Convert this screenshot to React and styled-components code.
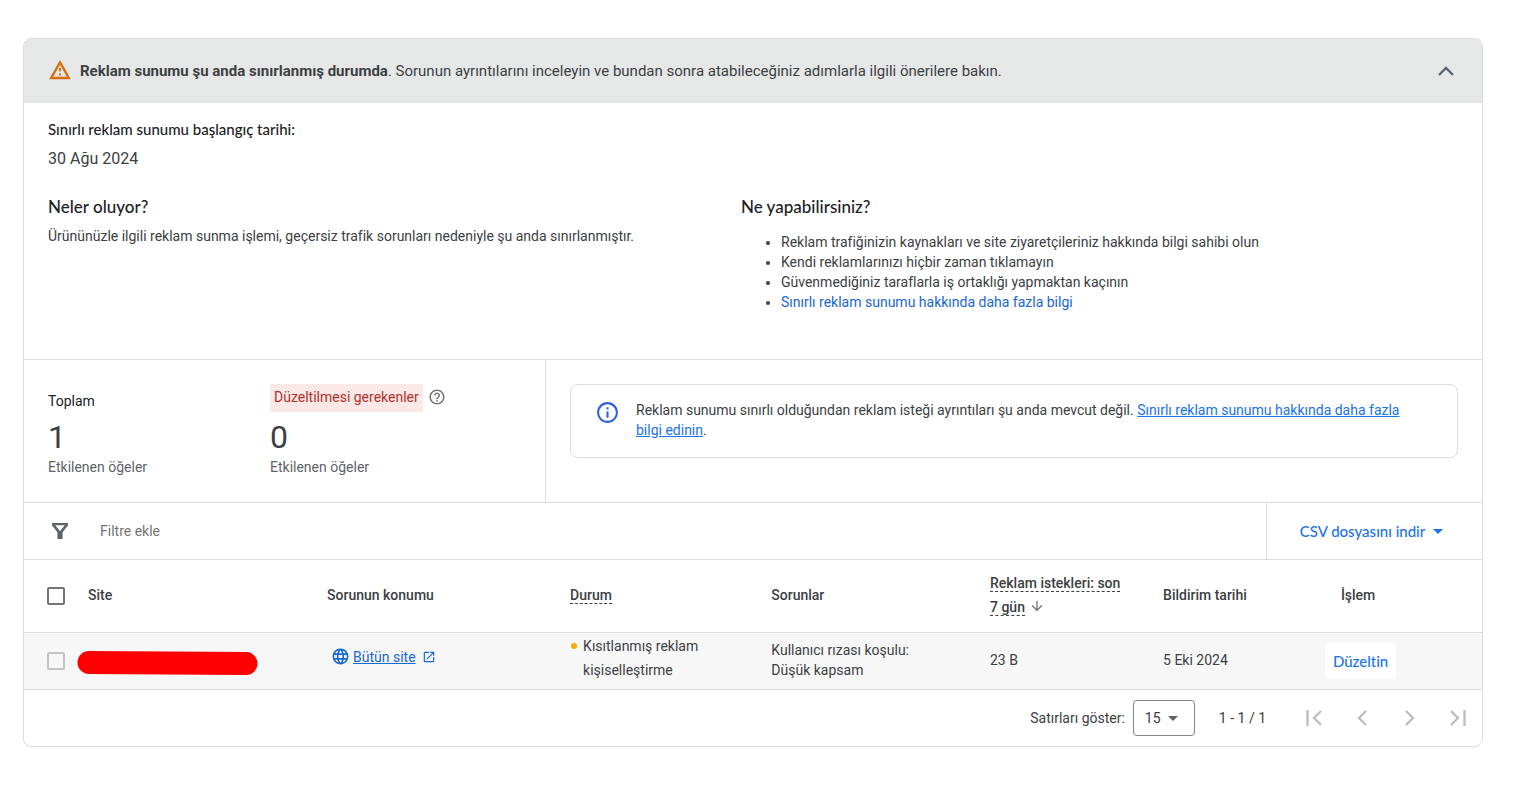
import React from 'react'
import styled, { createGlobalStyle } from 'styled-components'
import {
  MdArrowDownward,
  MdHelpOutline,
  MdInfoOutline,
  MdLanguage,
  MdOpenInNew,
} from 'react-icons/md'

const tips = [
  'Reklam trafiğinizin kaynakları ve site ziyaretçileriniz hakkında bilgi sahibi olun',
  'Kendi reklamlarınızı hiçbir zaman tıklamayın',
  'Güvenmediğiniz taraflarla iş ortaklığı yapmaktan kaçının',
]

const pagers = [
  { label: 'İlk sayfa', path: 'M9.5 8v16M23 9l-7 7 7 7' },
  { label: 'Önceki sayfa', path: 'M20 9l-7 7 7 7' },
  { label: 'Sonraki sayfa', path: 'M12 9l7 7-7 7' },
  { label: 'Son sayfa', path: 'M9 9l7 7-7 7M22.5 8v16' },
]

function App() {
  return (
    <Page>
      <GlobalStyle />
      <Card>
        <Banner />
        <Details />
        <Summary />
        <FilterBar />
        <SiteTable />
        <Pagination />
      </Card>
    </Page>
  )
}

export default App

function Banner() {
  return (
    <BannerBar>
      <svg width="24" height="24" viewBox="0 0 24 24" aria-hidden="true">
        <path d="M12 3.4L20.8 19H3.2z" fill="none" stroke="#d56e0c" strokeWidth="2.4" />
        <path d="M11 9h2v3.2h-2zM11 14.4h2v2.2h-2z" fill="#d56e0c" />
      </svg>
      <BannerText>
        <strong>Reklam sunumu şu anda sınırlanmış durumda</strong>. Sorunun ayrıntılarını inceleyin ve
        bundan sonra atabileceğiniz adımlarla ilgili önerilere bakın.
      </BannerText>
      <IconButton aria-label="Daralt">
        <LineIcon viewBox="0 0 32 32">
          <path d="M9 20l7-7 7 7" />
        </LineIcon>
      </IconButton>
    </BannerBar>
  )
}

function Details() {
  return (
    <DetailsWrap>
      <DateLabel>Sınırlı reklam sunumu başlangıç tarihi:</DateLabel>
      <DateValue>30 Ağu 2024</DateValue>
      <Columns>
        <div>
          <Heading>Neler oluyor?</Heading>
          <Paragraph>
            Ürününüzle ilgili reklam sunma işlemi, geçersiz trafik sorunları nedeniyle şu anda sınırlanmıştır.
          </Paragraph>
        </div>
        <div>
          <Heading>Ne yapabilirsiniz?</Heading>
          <TipList>
            {tips.map((tip) => (
              <li key={tip}>{tip}</li>
            ))}
            <li>
              <PlainLink href="#">Sınırlı reklam sunumu hakkında daha fazla bilgi</PlainLink>
            </li>
          </TipList>
        </div>
      </Columns>
    </DetailsWrap>
  )
}

function Summary() {
  return (
    <SummaryRow>
      <Stats>
        <div>
          <StatTitle $center>Toplam</StatTitle>
          <StatNumber>1</StatNumber>
          <StatLabel>Etkilenen öğeler</StatLabel>
        </div>
        <div>
          <StatTitle>
            <Chip>Düzeltilmesi gerekenler</Chip>
            <HelpButton aria-label="Yardım">
              <MdHelpOutline size={18} />
            </HelpButton>
          </StatTitle>
          <StatNumber>0</StatNumber>
          <StatLabel>Etkilenen öğeler</StatLabel>
        </div>
      </Stats>
      <Notice>
        <MdInfoOutline size={25} color="#2a63d8" />
        <p>
          Reklam sunumu sınırlı olduğundan reklam isteği ayrıntıları şu anda mevcut değil.{' '}
          <TextLink href="#">Sınırlı reklam sunumu hakkında daha fazla bilgi edinin</TextLink>.
        </p>
      </Notice>
    </SummaryRow>
  )
}

function FilterBar() {
  return (
    <FilterRow>
      <svg width="24" height="24" viewBox="0 0 24 24" aria-hidden="true">
        <path
          d="M4 4h16v2.3l-5.4 7V20H9.4v-6.7L4 6.3zM7.3 6.2L12 12.2l4.7-6z"
          fill="#5f6368"
          fillRule="evenodd"
        />
      </svg>
      <FilterInput placeholder="Filtre ekle" aria-label="Filtre ekle" />
      <CsvButton>
        CSV dosyasını indir
        <Caret />
      </CsvButton>
    </FilterRow>
  )
}

function SiteTable() {
  return (
    <Table>
      <colgroup>
        <Col $w="53px" />
        <Col $w="17.15%" />
        <Col $w="16.67%" />
        <Col $w="13.8%" />
        <Col $w="15%" />
        <Col $w="11.87%" />
        <Col $w="11.1%" />
        <Col />
      </colgroup>
      <thead>
        <tr>
          <CheckHead>
            <Checkbox type="checkbox" aria-label="Tümünü seç" />
          </CheckHead>
          <Th $left={11}>Site</Th>
          <Th>Sorunun konumu</Th>
          <Th>
            <Dotted>Durum</Dotted>
          </Th>
          <Th>Sorunlar</Th>
          <Th $right={36}>
            <Dotted>Reklam istekleri: son 7 gün</Dotted>
            <SortIcon size={16} />
          </Th>
          <Th>Bildirim tarihi</Th>
          <Th $left={16}>İşlem</Th>
        </tr>
      </thead>
      <tbody>
        <tr>
          <CheckCell>
            <Checkbox type="checkbox" aria-label="Siteyi seç" disabled />
          </CheckCell>
          <Td>
            <Redaction viewBox="0 0 182 26" aria-hidden="true">
              <path d="M12 12.5L169 13.5" stroke="#f00" strokeWidth="23" strokeLinecap="round" />
            </Redaction>
          </Td>
          <Td>
            <SiteLink href="#">
              <MdLanguage size={19} />
              <span>Bütün site</span>
              <MdOpenInNew size={14} />
            </SiteLink>
          </Td>
          <Td $top>
            <Status>
              <Dot />
              Kısıtlanmış reklam kişiselleştirme
            </Status>
          </Td>
          <TextCell>
            Kullanıcı rızası koşulu:
            <br />
            Düşük kapsam
          </TextCell>
          <TextCell>23 B</TextCell>
          <TextCell>5 Eki 2024</TextCell>
          <Td>
            <FixButton>Düzeltin</FixButton>
          </Td>
        </tr>
      </tbody>
    </Table>
  )
}

function Pagination() {
  return (
    <Footer>
      <label htmlFor="rows">Satırları göster:</label>
      <SelectWrap>
        <Select id="rows" defaultValue="15">
          <option>15</option>
          <option>30</option>
          <option>50</option>
        </Select>
        <SelectCaret />
      </SelectWrap>
      <Range>1 - 1 / 1</Range>
      {pagers.map((pager) => (
        <PageButton key={pager.label} disabled aria-label={pager.label}>
          <LineIcon viewBox="0 0 32 32">
            <path d={pager.path} />
          </LineIcon>
        </PageButton>
      ))}
    </Footer>
  )
}

const line = '1px solid #dcdcde'
const display = '"Google Sans", Lato, sans-serif'

const GlobalStyle = createGlobalStyle`
  * {
    box-sizing: border-box;
  }
  body {
    margin: 0;
    background: #fff;
    color: #3c4043;
    font: 14px/20px Roboto, sans-serif;
    font-variant-ligatures: none;
  }
  p, h2, ul {
    margin: 0;
  }
  button, input, select {
    font: inherit;
    font-variant-ligatures: none;
    color: inherit;
  }
  svg {
    flex-shrink: 0;
  }
`

const Page = styled.main`
  padding: 38px 35px 48px 23px;
`

const Card = styled.section`
  border: ${line};
  border-radius: 8px;
  overflow: hidden;
`

const BannerBar = styled.header`
  display: flex;
  align-items: center;
  height: 64px;
  padding: 0 20px 0 24px;
  background: #e6e8e7;
`

const BannerText = styled.p`
  flex: 1;
  margin-left: 8px;
  font-size: 15px;

  strong {
    font-weight: 700;
  }
`

const IconButton = styled.button`
  display: flex;
  padding: 0;
  border: 0;
  background: none;
  color: #5a646e;
  cursor: pointer;
`

const LineIcon = styled.svg`
  width: 32px;
  height: 32px;
  fill: none;
  stroke: currentColor;
  stroke-width: 2.3;
`

const DetailsWrap = styled.div`
  padding: 16px 48px 47px 24px;
`

const DateLabel = styled.div`
  font-family: ${display};
  font-size: 15px;
  font-weight: 500;
  color: #202124;
`

const DateValue = styled.div`
  margin-top: 8px;
  font-size: 16px;
  line-height: 24px;
`

const Columns = styled.div`
  display: grid;
  grid-template-columns: 1fr 1fr;
  margin-top: 24px;
`

const Heading = styled.h2`
  font-family: ${display};
  font-size: 17px;
  font-weight: 500;
  line-height: 24px;
  color: #202124;
`

const Paragraph = styled.p`
  margin-top: 7px;
`

const TipList = styled.ul`
  margin-top: 13px;
  padding-left: 40px;
`

const PlainLink = styled.a`
  color: #1967d2;
  text-decoration: none;
`

const TextLink = styled.a`
  color: #1a73e8;
  text-decoration: underline;
`

const SummaryRow = styled.div`
  display: flex;
  align-items: flex-start;
  border-top: ${line};
`

const Stats = styled.div`
  display: grid;
  grid-template-columns: 222px 1fr;
  flex: 0 0 522px;
  padding: 24px 24px 25px;
  border-right: ${line};
`

const StatTitle = styled.div`
  display: flex;
  align-items: ${(props) => (props.$center ? 'center' : 'flex-start')};
  height: 34px;
  color: #202124;
`

const Chip = styled.span`
  height: 28px;
  padding: 0 4px;
  border-radius: 2px;
  background: #fce8e6;
  line-height: 26px;
  color: #b3312c;
`

const HelpButton = styled.button`
  display: flex;
  margin-left: 5px;
  padding: 4px 0;
  border: 0;
  background: none;
  color: #757575;
`

const StatNumber = styled.div`
  font-size: 32px;
  line-height: 39px;
`

const StatLabel = styled.div`
  color: #5f6368;
`

const Notice = styled.div`
  display: flex;
  align-items: flex-start;
  flex: 1;
  margin: 24px;
  padding: 15px 32px 17px 24px;
  border: ${line};
  border-radius: 8px;

  p {
    margin-left: 16px;
  }
`

const FilterRow = styled.div`
  display: flex;
  align-items: center;
  height: 57px;
  padding-left: 24px;
  border-top: ${line};
`

const FilterInput = styled.input`
  flex: 1;
  min-width: 0;
  margin-left: 28px;
  padding: 0;
  border: 0;
  outline: 0;

  &::placeholder {
    color: #757575;
    opacity: 1;
  }
`

const CsvButton = styled.button`
  display: flex;
  align-items: center;
  justify-content: center;
  width: 216px;
  height: 100%;
  padding: 0 6px 0 0;
  border: 0;
  border-left: ${line};
  background: none;
  font-family: ${display};
  font-size: 15px;
  font-weight: 500;
  color: #1a73e8;
  cursor: pointer;
`

const Caret = styled.span`
  margin-left: 8px;
  border: 5px solid transparent;
  border-top-color: currentColor;
  border-bottom: 0;
`

const Table = styled.table`
  width: 100%;
  border-collapse: collapse;
  table-layout: fixed;

  tr {
    border-top: ${line};
  }
  tbody tr {
    background: #f7f7f7;
  }
`

const Col = styled.col`
  width: ${(props) => props.$w || 'auto'};
`

const Th = styled.th`
  height: 73px;
  padding: 0 ${(props) => props.$right || 8}px 2px ${(props) => props.$left || 0}px;
  font-weight: 500;
  line-height: 24px;
  text-align: left;
`

const Td = styled.td`
  height: 56px;
  padding: 0;
  vertical-align: ${(props) => (props.$top ? 'top' : 'middle')};
`

const TextCell = styled(Td)`
  padding-bottom: 2px;
`

const CheckHead = styled(Th)`
  padding: 0 0 0 23px;
`

const CheckCell = styled(Td)`
  padding-left: 23px;
`

const Checkbox = styled.input`
  display: block;
  appearance: none;
  width: 18px;
  height: 18px;
  margin: 0;
  border: 2px solid #757575;
  border-radius: 2px;

  &:disabled {
    border-color: #c4c4c4;
  }
`

const Dotted = styled.span`
  border-bottom: 1px dashed #3c4043;
`

const SortIcon = styled(MdArrowDownward)`
  margin-left: 4px;
  color: #757575;
  vertical-align: -2px;
`

const Redaction = styled.svg`
  display: block;
  width: 182px;
  height: 26px;
  margin-top: 4px;
`

const SiteLink = styled.a`
  display: flex;
  align-items: center;
  margin: -8px 0 0 4px;
  color: #1967d2;
  text-decoration: none;

  span {
    margin: 0 6px 0 3px;
    text-decoration: underline;
  }
`

const Status = styled.div`
  position: relative;
  width: 150px;
  padding-left: 13px;
  padding-top: 1px;
  line-height: 24px;
`

const Dot = styled.i`
  position: absolute;
  top: 10px;
  left: 1px;
  width: 6px;
  height: 6px;
  border-radius: 50%;
  background: #f9ab00;
`

const FixButton = styled.button`
  height: 36px;
  padding: 0 8px;
  border: 0;
  border-radius: 4px;
  background: #fff;
  font-family: ${display};
  font-size: 15px;
  font-weight: 500;
  color: #1a73e8;
  cursor: pointer;
`

const Footer = styled.footer`
  display: flex;
  align-items: center;
  justify-content: flex-end;
  height: 57px;
  border-top: ${line};
`

const SelectWrap = styled.div`
  position: relative;
  margin-left: 8px;
`

const Select = styled.select`
  appearance: none;
  display: block;
  width: 62px;
  height: 36px;
  padding: 0 11px;
  border: 1px solid #80868b;
  border-radius: 4px;
  background: #fff;
`

const SelectCaret = styled(Caret)`
  position: absolute;
  top: 16px;
  right: 17px;
  color: #5f6368;
  pointer-events: none;
`

const Range = styled.span`
  margin: 0 24px;
`

const PageButton = styled(IconButton)`
  width: 48px;
  justify-content: center;
  color: #bdbdbd;
`
